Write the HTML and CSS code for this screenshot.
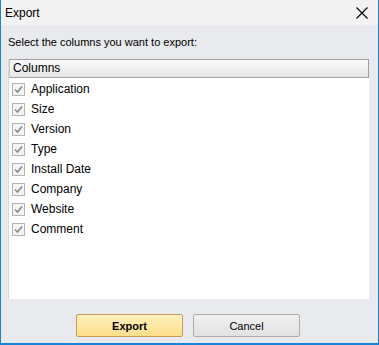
FILE: index.html
```html
<!DOCTYPE html>
<html lang="en">
<head>
    <meta charset="UTF-8">
    <title>Export</title>
    <link rel="stylesheet" href="styles.css">
</head>
<body>
    <div class="window">
        <header class="titlebar">
            <span class="title">Export</span>
            <svg class="close" width="12" height="12" viewBox="0 0 12 12">
                <path d="M0.5 0.5 L11.5 11.5 M11.5 0.5 L0.5 11.5" stroke="#000" stroke-width="1.1" fill="none"/>
            </svg>
        </header>

        <main class="content">
            <p class="prompt">Select the columns you want to export:</p>

            <div class="listbox">
                <div class="list-header">Columns</div>
                <ul class="list">
                    <li><span class="check"></span>Application</li>
                    <li><span class="check"></span>Size</li>
                    <li><span class="check"></span>Version</li>
                    <li><span class="check"></span>Type</li>
                    <li><span class="check"></span>Install Date</li>
                    <li><span class="check"></span>Company</li>
                    <li><span class="check"></span>Website</li>
                    <li><span class="check"></span>Comment</li>
                </ul>
            </div>

            <div class="buttons">
                <button class="btn btn-primary">Export</button>
                <button class="btn">Cancel</button>
            </div>
        </main>
    </div>
</body>
</html>
```

FILE: styles.css
```css
* {
    margin: 0;
    padding: 0;
    box-sizing: border-box;
}

body {
    width: 379px;
    height: 345px;
    font-family: "Liberation Sans", Arial, sans-serif;
    font-size: 12px;
    color: #000;
    background: #e8eaed;
    overflow: hidden;
}

.window {
    width: 379px;
    height: 345px;
    display: flex;
    flex-direction: column;
    border-left: 1px solid #1883d7;
    border-right: 1px solid #1883d7;
    border-bottom: 2px solid #1883d7;
    background: #e8eaed;
}

/* Title bar */
.titlebar {
    height: 25px;
    display: flex;
    align-items: center;
    justify-content: space-between;
    padding: 0 10px 0 4px;
    background: #f2f2f2;
}

.title {
    font-size: 12px;
    line-height: 16px;
}

.close {
    display: block;
}

/* Main area */
.content {
    flex: 1;
    display: flex;
    flex-direction: column;
    padding: 9px 8px 0 7px;
}

.prompt {
    font-size: 11px;
    line-height: 17px;
    margin-bottom: 8px;
}

.listbox {
    height: 240px;
    width: 361px;
    background: #fff;
    border-left: 1px solid #d8d8d8;
    display: flex;
    flex-direction: column;
}

.list-header {
    height: 19px;
    line-height: 17px;
    padding-left: 3px;
    background: linear-gradient(#fbfbfb, #e4e5e7);
    border: 1px solid #a0a0a0;
    border-left-color: #c8c8c8;
}

.list {
    list-style: none;
    padding-top: 1px;
}

.list li {
    height: 20px;
    display: flex;
    align-items: center;
    padding-left: 3px;
    line-height: 16px;
}

.check {
    width: 13px;
    height: 13px;
    margin-right: 6px;
    border: 1px solid #b4b4b4;
    background: #f4f4f4 url("data:image/svg+xml,%3Csvg xmlns='http://www.w3.org/2000/svg' width='11' height='11'%3E%3Cpath d='M2 5.5 L4.5 8 L9 2.5' stroke='%23888888' stroke-width='1.6' fill='none'/%3E%3C/svg%3E") no-repeat center;
}

/* Buttons */
.buttons {
    display: flex;
    gap: 10px;
    padding-top: 15px;
    padding-left: 68px;
}

.btn {
    width: 107px;
    height: 23px;
    font-family: inherit;
    font-size: 11px;
    color: #000;
    border: 1px solid #adadad;
    border-radius: 2px;
    background: linear-gradient(#f0f0f0, #e2e2e2);
}

.btn-primary {
    font-weight: bold;
    border-color: #c79b62;
    background: linear-gradient(#fff1bc, #fddf8a);
}
```
